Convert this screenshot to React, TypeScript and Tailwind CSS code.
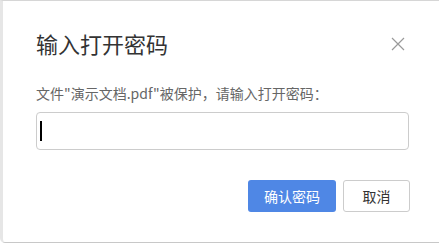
import React from "react";

const font = { fontFamily: '"Noto Sans CJK SC", "Noto Sans", sans-serif' };

const CloseIcon = () => (
  <svg width="14" height="14" viewBox="0 0 14 14" fill="none">
    <path d="M1 1L13 13M13 1L1 13" stroke="#9a9a9a" strokeWidth="1.2" />
  </svg>
);

const App = () => {
  return (
    <div className="w-[439px] h-[244px] bg-white overflow-hidden" style={font}>
      <div className="h-[243px] w-[460px] bg-white border-t border-b border-l-[3px] border-t-[#d6d6d6] border-b-[#c8c8c8] border-l-[#e6e6e6] rounded-bl-[5px]">
        <div className="w-[439px] pl-[33px] pr-[30px] pt-[27px]">
          <div className="flex items-center justify-between">
            <h1 className="text-[22px] leading-[30px] text-[#333333] font-normal">
              输入打开密码
            </h1>
            <button className="w-[20px] h-[20px] flex items-center justify-center mr-[4px] mt-[2px]">
              <CloseIcon />
            </button>
          </div>

          <p className="mt-[25px] text-[14px] leading-[20px] text-[#666666]">
            文件"演示文档.pdf"被保护，请输入打开密码：
          </p>

          <div className="mt-[9px] h-[38px] w-[373px] border border-[#cccccc] rounded-[4px] flex items-center pl-[3px]">
            <span className="w-[2px] h-[20px] bg-black" />
          </div>

          <div className="mt-[30px] flex justify-end gap-[7px] w-[374px]">
            <button className="w-[88px] h-[32px] rounded-[3px] bg-[#4f87e5] text-white text-[14px]">
              确认密码
            </button>
            <button className="w-[67px] h-[32px] rounded-[3px] bg-white border border-[#cccccc] text-[#333333] text-[14px]">
              取消
            </button>
          </div>
        </div>
      </div>
    </div>
  );
};

export default App;
